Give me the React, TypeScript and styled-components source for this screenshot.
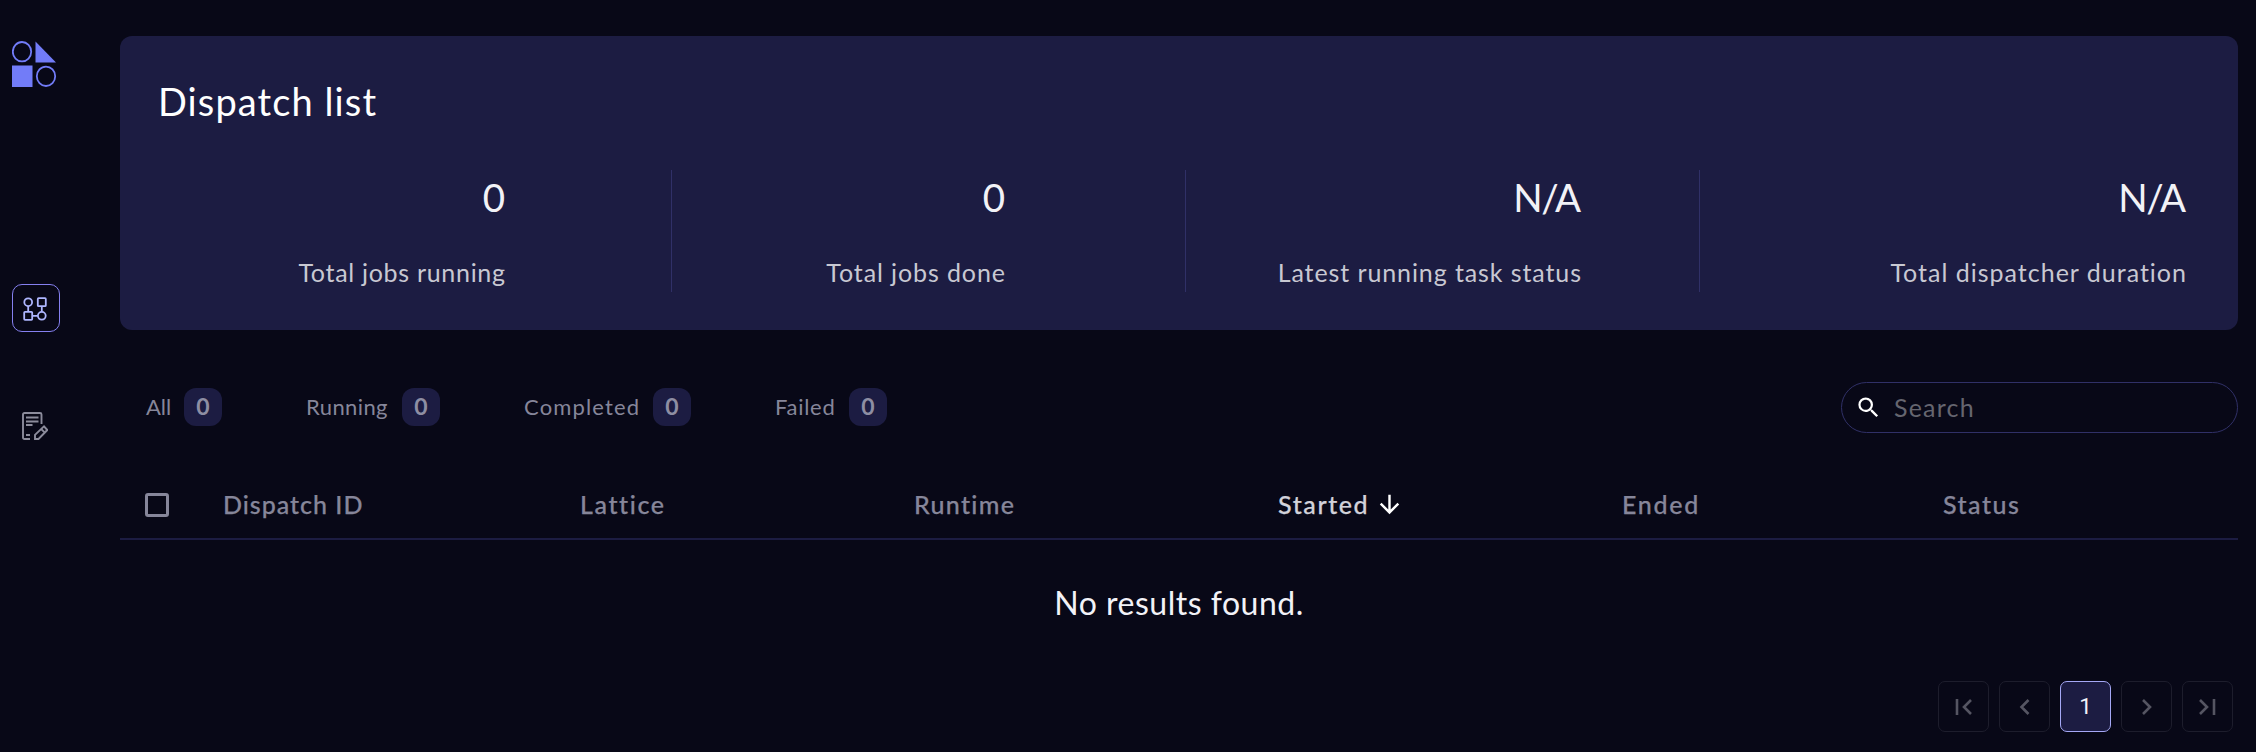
import React from "react";
import styled, { createGlobalStyle } from "styled-components";

const Global = createGlobalStyle`
  * { box-sizing: border-box; }
  body { margin: 0; background: #080817; font-family: Lato, "Open Sans", sans-serif; color: #fff; }
`;

const Page = styled.div`
  display: flex;
  width: 2256px;
  height: 752px;
  background: #080817;
  overflow: hidden;
`;
const Sidebar = styled.nav`
  display: flex;
  flex-direction: column;
  width: 120px;
  padding: 41px 0 0 12px;
`;
const LogoLink = styled.a`
  height: 46px;
  margin-bottom: 197px;
`;
const NavButton = styled.a<{ $active?: boolean }>`
  display: flex;
  align-items: center;
  justify-content: center;
  width: 48px;
  height: 48px;
  margin-bottom: 69px;
  padding: 1px 2px 0 0;
  border-radius: 10px;
  border: 1px solid ${(p) => (p.$active ? "#8580f0" : "transparent")};
`;
const Main = styled.main`
  display: flex;
  flex-direction: column;
  width: 2118px;
  padding-top: 36px;
`;
const Panel = styled.section`
  height: 294px;
  padding: 40px 0 0 38px;
  border-radius: 12px;
  background: #1c1c42;
`;
const Title = styled.h1`
  margin: 0;
  height: 50px;
  font-weight: 400;
  font-size: 38px;
  line-height: 50px;
  letter-spacing: 1.1px;
`;
const Stats = styled.div`
  display: flex;
  margin-top: 44px;
`;
const Stat = styled.div<{ $width: number; $inset: number }>`
  display: flex;
  flex-direction: column;
  align-items: flex-end;
  width: ${(p) => p.$width}px;
  height: 122px;
  padding-right: ${(p) => p.$inset}px;
  border-right: 1px solid #303067;
  &:last-child { border-right: 0; }
`;
const StatValue = styled.div`
  margin-top: 3px;
  height: 48px;
  font-size: 38.5px;
  line-height: 48px;
  letter-spacing: -1.5px;
  padding-right: 1.5px;
  color: #f2f2f7;
`;
const StatLabel = styled.div<{ $track: number }>`
  margin-top: 34px;
  font-size: 25px;
  line-height: 34px;
  letter-spacing: ${(p) => p.$track}px;
  margin-right: -${(p) => p.$track}px;
  color: #c8c8d2;
`;
const Toolbar = styled.div`
  display: flex;
  justify-content: space-between;
  margin-top: 52px;
  height: 51px;
`;
const Filters = styled.div`
  display: flex;
  padding: 6px 0 0 26px;
`;
const Filter = styled.button<{ $width: number }>`
  display: flex;
  justify-content: space-between;
  align-items: center;
  width: ${(p) => p.$width}px;
  height: 38px;
  margin: 0 84px 0 0;
  padding: 0;
  border: 0;
  background: none;
  font: inherit;
  font-size: 22px;
  color: #86869a;
`;
const FilterName = styled.span<{ $track: number }>`
  line-height: 38px;
  letter-spacing: ${(p) => p.$track}px;
`;
const Count = styled.span`
  width: 38px;
  height: 38px;
  border-radius: 12px;
  background: #1c1c42;
  line-height: 37px;
  text-align: center;
  font-weight: 700;
  font-size: 23px;
  color: #8e8ea3;
`;
const SearchBox = styled.label`
  display: flex;
  align-items: center;
  width: 397px;
  height: 51px;
  padding-left: 12.5px;
  border: 1px solid #303067;
  border-radius: 26px;
`;
const SearchInput = styled.input`
  width: 300px;
  margin: 0 0 2px 12.5px;
  padding: 0;
  border: 0;
  outline: 0;
  background: none;
  font: inherit;
  font-size: 25px;
  letter-spacing: 1.2px;
  color: #fff;
  &::placeholder { color: #65656f; opacity: 1; }
`;
const TableHead = styled.div`
  display: flex;
  align-items: center;
  height: 107px;
  padding: 37px 0 0 25px;
  border-bottom: 2px solid #1c1c42;
`;
const Checkbox = styled.span`
  width: 24px;
  height: 24px;
  margin: 2px 54px 0 0;
  border: 3px solid #86869a;
  border-radius: 3px;
`;
const HeadCell = styled.div<{ $width: number; $track: number; $active?: boolean }>`
  display: flex;
  align-items: center;
  gap: 6px;
  width: ${(p) => p.$width}px;
  font-size: 25px;
  font-weight: 500;
  -webkit-text-stroke: 0.25px currentColor;
  line-height: 34px;
  letter-spacing: ${(p) => p.$track}px;
  color: ${(p) => (p.$active ? "#d2d2da" : "#86869a")};
`;
const Empty = styled.p`
  margin: 41px 0 0;
  height: 44px;
  text-align: center;
  font-size: 32px;
  line-height: 44px;
  letter-spacing: 0.5px;
  color: #f2f2f7;
`;
const Pagination = styled.div`
  display: flex;
  justify-content: flex-end;
  gap: 10px;
  margin-top: 56px;
  padding-right: 5px;
`;
const PageButton = styled.button<{ $active?: boolean }>`
  display: flex;
  align-items: center;
  justify-content: center;
  width: 51px;
  height: 51px;
  padding: 0 0 2px;
  border: 1px solid ${(p) => (p.$active ? "#a5a8f5" : "#1d1d2c")};
  border-radius: 7px;
  background: ${(p) => (p.$active ? "#1c1c42" : "transparent")};
  font-family: Roboto, sans-serif;
  font-size: 22.5px;
  color: #f2f2f7;
`;

const stats = [
  { value: "0", label: "Total jobs running", width: 514, inset: 166, track: 0.7 },
  { value: "0", label: "Total jobs done", width: 514, inset: 180, track: 0.9 },
  { value: "N/A", label: "Latest running task status", width: 514, inset: 118, track: 0.9 },
  { value: "N/A", label: "Total dispatcher duration", width: 486, inset: 0, track: 1 },
];
const filters = [
  { name: "All", width: 76, track: 0 },
  { name: "Running", width: 134, track: 0.4 },
  { name: "Completed", width: 167, track: 1.15 },
  { name: "Failed", width: 112, track: 0.7 },
];
const columns = [
  { name: "Dispatch ID", width: 357, track: 1 },
  { name: "Lattice", width: 334, track: 1.6 },
  { name: "Runtime", width: 364, track: 1.3 },
  { name: "Started", width: 344, track: 1.6, active: true },
  { name: "Ended", width: 321, track: 1.7 },
  { name: "Status", width: 100, track: 1.5 },
];

const Logo = () => (
  <svg width="46" height="48" viewBox="0 0 46 48" fill="none" stroke="#727cf8" strokeWidth="1.8">
    <ellipse cx="10" cy="10.7" rx="9.2" ry="9.7" />
    <path d="M23.5 0.5V21.5H44Z" fill="#727cf8" stroke="none" />
    <path d="M0 24.5H20.5V46H0Z" fill="#727cf8" stroke="none" />
    <ellipse cx="34" cy="35.3" rx="9.2" ry="9.7" />
  </svg>
);
const LatticeIcon = () => (
  <svg width="24" height="24" viewBox="0 0 24 24" fill="none" stroke="#aeb6ff" strokeWidth="1.8">
    <circle cx="5.2" cy="5.2" r="3.9" />
    <rect x="14.8" y="1.2" width="8" height="8" rx="0.8" />
    <rect x="1.2" y="14.8" width="8" height="8" rx="0.8" />
    <circle cx="18.8" cy="18.8" r="3.9" />
    <path d="M5.2 9V14.8M18.8 9.2V14.8M9.2 18.8H14.8" />
  </svg>
);
const LogsIcon = () => (
  <svg width="26" height="28" viewBox="0 0 26 28" fill="none" stroke="#8c8c9c" strokeWidth="1.9">
    <path d="M8 27H2.5Q1 27 1 25.5V2.5Q1 1 2.5 1H18Q19.5 1 19.5 2.5V12M4 5.5H16.5M4 9.5H16.5M4 13H10.5M4 23H8" />
    <path d="M13 27V22.8L22 14.3L25.3 18L16.5 27ZM19.2 17L22.8 20.6" />
  </svg>
);
const SearchIcon = () => (
  <svg width="27" height="27" viewBox="0 0 24 24" fill="#fff">
    <path d="M15.5 14h-.79l-.28-.27A6.471 6.471 0 0 0 16 9.5 6.5 6.5 0 1 0 9.5 16c1.61 0 3.09-.59 4.23-1.57l.27.28v.79l5 4.99L20.49 19l-4.99-5zm-6 0C7.01 14 5 11.99 5 9.5S7.01 5 9.5 5 14 7.01 14 9.5 11.99 14 9.5 14z" />
  </svg>
);
const ArrowDown = () => (
  <svg width="29" height="29" viewBox="0 0 24 24" fill="#fff">
    <path d="m20 12-1.41-1.41L13 16.17V4h-2v12.17l-5.58-5.59L4 12l8 8 8-8z" />
  </svg>
);
const PageIcon = ({ d }: { d: string }) => (
  <svg width="32" height="32" viewBox="0 0 32 32" fill="none" stroke="#555562" strokeWidth="2.6">
    <path d={d} />
  </svg>
);

export default function App() {
  return (
    <>
      <Global />
      <Page>
        <Sidebar>
          <LogoLink><Logo /></LogoLink>
          <NavButton $active><LatticeIcon /></NavButton>
          <NavButton><LogsIcon /></NavButton>
        </Sidebar>
        <Main>
          <Panel>
            <Title>Dispatch list</Title>
            <Stats>
              {stats.map((s) => (
                <Stat key={s.label} $width={s.width} $inset={s.inset}>
                  <StatValue>{s.value}</StatValue>
                  <StatLabel $track={s.track}>{s.label}</StatLabel>
                </Stat>
              ))}
            </Stats>
          </Panel>
          <Toolbar>
            <Filters>
              {filters.map((f) => (
                <Filter key={f.name} $width={f.width}>
                  <FilterName $track={f.track}>{f.name}</FilterName>
                  <Count>0</Count>
                </Filter>
              ))}
            </Filters>
            <SearchBox>
              <SearchIcon />
              <SearchInput placeholder="Search" />
            </SearchBox>
          </Toolbar>
          <TableHead>
            <Checkbox />
            {columns.map((c) => (
              <HeadCell key={c.name} $width={c.width} $track={c.track} $active={c.active}>
                {c.name}
                {c.active && <ArrowDown />}
              </HeadCell>
            ))}
          </TableHead>
          <Empty>No results found.</Empty>
          <Pagination>
            <PageButton><PageIcon d="M9 9V25M23 10L16 17L23 24" /></PageButton>
            <PageButton><PageIcon d="M19.5 10L12.5 17L19.5 24" /></PageButton>
            <PageButton $active>1</PageButton>
            <PageButton><PageIcon d="M12 10L19 17L12 24" /></PageButton>
            <PageButton><PageIcon d="M8 10L15 17L8 24M22 9V25" /></PageButton>
          </Pagination>
        </Main>
      </Page>
    </>
  );
}
